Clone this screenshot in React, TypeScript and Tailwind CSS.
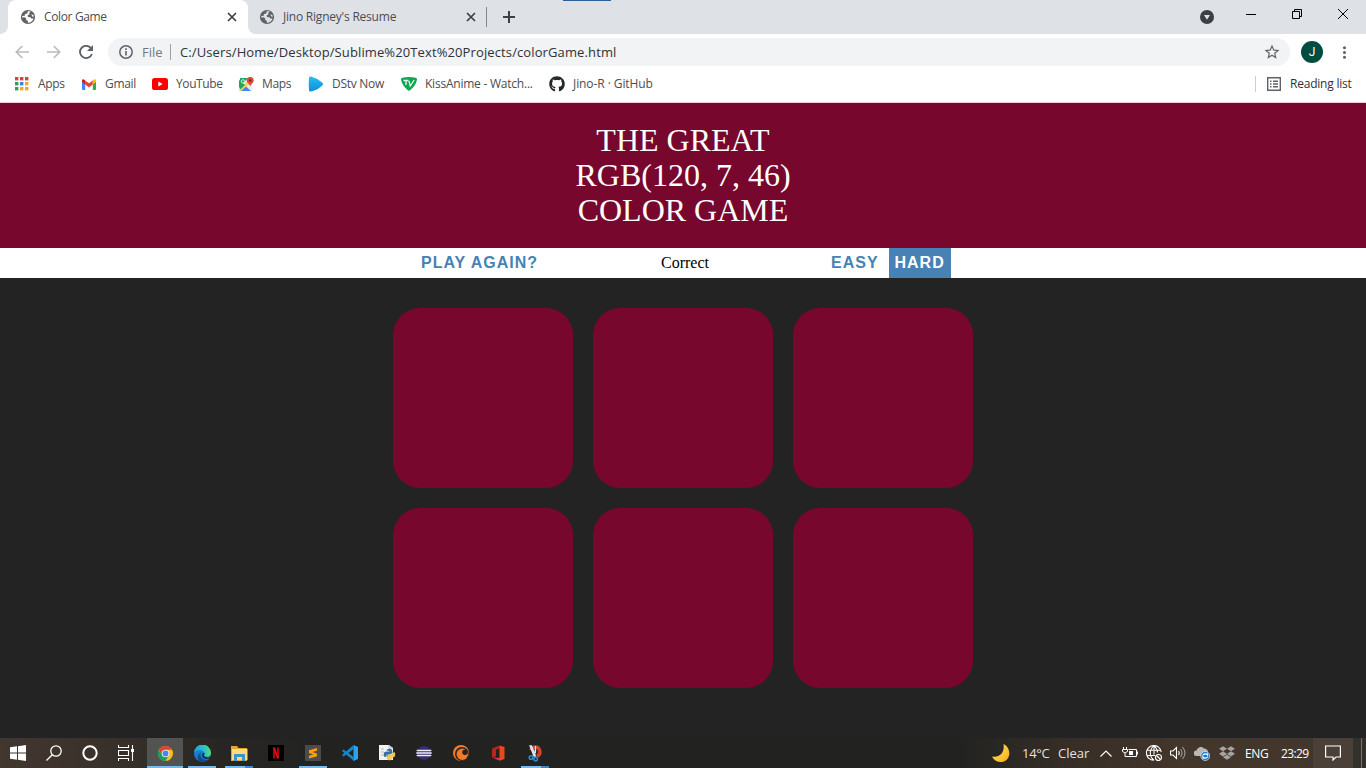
import React from "react";
import { FaGithub, FaDropbox, FaPython } from "react-icons/fa";
import { MdStarBorder, MdMoreVert } from "react-icons/md";

const Cross = () => (
  <svg className="size-[10px] shrink-0" viewBox="0 0 10 10" stroke="#3c4043" strokeWidth="1.7">
    <path d="M1 1l8 8M9 1L1 9" />
  </svg>
);

const GlobeIcon = ({ land }: { land: string }) => (
  <svg className="size-4 shrink-0" viewBox="0 0 16 16">
    <circle cx="8" cy="8" r="7.100" fill="#5f6368" />
    <path d="M7.800 2.300L10.800 2.300 9.200 3.900 9.500 5.300 7.600 6.600 8 8.100 10.500 8.200 11.300 9.600 13.600 9.600C12.800 12.300 10.700 13.900 7.800 13.800L7.900 11.900 6.200 11 6.100 9.300 4.300 8.200 2.200 8.500 2.200 7 4.700 6.700 5.100 5 7.300 4.400z" fill={land} />
    <path d="M11.300 5.300l2.100.600.400 1.900-1.600-.300z" fill={land} />
  </svg>
);

function TabStrip() {
  return (
    <div className="relative flex h-[34px] bg-[#dee1e6] pl-2 text-[12px] leading-[34px] text-[#4a4d51]">
      <div className="absolute left-[563px] top-0 h-px w-12 bg-[#2c5f96]" />
      <div className="absolute left-0 bottom-0 size-2 bg-white" />
      <div className="absolute left-0 bottom-0 size-2 rounded-br-lg bg-[#dee1e6]" />
      <div className="absolute left-[248px] bottom-0 size-2 bg-white" />
      <div className="absolute left-[248px] bottom-0 size-2 rounded-bl-lg bg-[#dee1e6]" />
      <div className="flex w-[240px] items-center rounded-t-lg bg-white pl-3">
        <GlobeIcon land="#ffffff" />
        <span className="ml-2 w-[183px] tracking-[-0.36px]">Color Game</span>
        <Cross />
      </div>
      <div className="flex w-[239px] items-center pl-[11px]">
        <GlobeIcon land="#dee1e6" />
        <span className="ml-2 w-[183px] tracking-[-0.22px]">Jino Rigney's Resume</span>
        <Cross />
      </div>
      <div className="-ml-px mt-[7px] h-5 w-px bg-[#85888d]" />
      <svg className="ml-4 mt-[11px] size-3" viewBox="0 0 12 12" stroke="#3c4043" strokeWidth="2">
        <path d="M6 0v12M0 6h12" />
      </svg>
      <svg className="ml-auto mt-[10px] size-[14px]" viewBox="0 0 14 14">
        <circle cx="7" cy="7" r="7" fill="#3c4043" />
        <path d="M4 5h6L7 9.800z" fill="#dee1e6" />
      </svg>
      <svg className="ml-8 mt-[14px] h-px w-[10px]" viewBox="0 0 10 1"><path d="M0 0h10v1H0z" /></svg>
      <svg className="ml-9 mt-[9px] size-[10px]" viewBox="0 0 10 10" fill="none" stroke="#000">
        <path d="M.5 2.500h7v7h-7zM2.500 2.500v-2h7v7h-2" />
      </svg>
      <svg className="ml-9 mr-[18px] mt-[9px] size-[10px]" viewBox="0 0 10 10" stroke="#000">
        <path d="M0 0l10 10M10 0L0 10" />
      </svg>
    </div>
  );
}

function Toolbar() {
  return (
    <div className="flex h-9 items-center bg-white pl-[15px]">
      <svg className="h-[14px] w-[14px]" viewBox="0 0 14 14" fill="none" stroke="#babcbe" strokeWidth="1.700"><path d="M14 7H1.500M7.300 1L1.300 7l6 6" /></svg>
      <svg className="ml-[18px] h-[14px] w-[14px]" viewBox="0 0 14 14" fill="none" stroke="#babcbe" strokeWidth="1.700"><path d="M0 7h12.500M6.700 1l6 6-6 6" /></svg>
      <svg className="ml-[18px] size-[14px]" viewBox="0 0 14 14">
        <path d="M11.700 2.900A6.100 6.100 0 1012.900 9" fill="none" stroke="#5f6368" strokeWidth="1.900" />
        <path d="M14 0v6H8z" fill="#5f6368" />
      </svg>
      <div className="ml-[15px] flex h-7 w-[1182px] items-center rounded-full bg-[#f1f3f4] pl-[11px]">
        <svg className="size-[14px]" viewBox="0 0 14 14"><circle cx="7" cy="7" r="6.200" fill="none" stroke="#5f6368" strokeWidth="1.500" /><path d="M6.200 3.300h1.600v1.600H6.200zM6.200 6.100h1.600v4.500H6.200z" fill="#5f6368" /></svg>
        <span className="ml-[9px] w-[28px] pt-px text-[13px] text-[#74787c]">File</span>
        <div className="h-4 w-px bg-[#9aa0a6]" />
        <span className="ml-[9px] whitespace-nowrap pt-px text-[13px] tracking-[0.115px] text-[#303236]">C:/Users/Home/Desktop/Sublime%20Text%20Projects/colorGame.html</span>
        <MdStarBorder className="ml-auto mr-[9px] size-[18px] text-[#5f6368]" />
      </div>
      <div className="ml-[11px] flex size-[22px] items-center justify-center rounded-full bg-[#004d40] font-['Roboto',sans-serif] text-[12px] text-white">J</div>
      <MdMoreVert className="ml-3 size-[19px] text-[#5f6368]" />
    </div>
  );
}

const AppsIcon = () => {
  const colors = ["#d94437", "#d94437", "#d94437", "#2f9e58", "#3b82e0", "#e8ad20", "#2f9e58", "#e8ad20", "#e8ad20"];
  return (
    <svg className="size-[14px]" viewBox="0 0 14 14">
      {colors.map((c, i) => <rect key={i} x={(i % 3) * 5} y={Math.floor(i / 3) * 5} width="3.400" height="3.400" fill={c} />)}
    </svg>
  );
};
const GmailIcon = () => (
  <svg className="h-[11px] w-[14px]" viewBox="0 0 14 11">
    <path d="M0 2v8q0 1 1 1h2.200V4.400z" fill="#4285f4" />
    <path d="M14 2v8q0 1-1 1h-2.200V4.400z" fill="#34a853" />
    <path d="M3.200 1.400L7 4.300l3.800-2.900v4.100L7 8.400 3.200 5.500z" fill="#ea4335" />
    <path d="M0 1.600Q.300-.600 2.400.700l.800.700v4.100L0 3z" fill="#c5221f" />
    <path d="M14 1.600Q13.700-.600 11.600.700l-.800.700v4.100L14 3z" fill="#fbbc04" />
  </svg>
);
const YouTubeIcon = () => (
  <svg className="h-[12px] w-4" viewBox="0 0 16 12">
    <rect width="16" height="12" rx="2.600" fill="#f00" /><path d="M6.300 3.400L10.600 6 6.300 8.600z" fill="#fff" />
  </svg>
);
const MapsIcon = () => (
  <svg className="size-[15px]" viewBox="0 0 15 15">
    <rect y="1" width="13" height="13" rx="1.500" fill="#e8eaed" />
    <path d="M1.300 1H9L1 9.800V2q0-1 .3-1z" fill="#1fa463" />
    <path d="M0 12.500L10.500 2 13 5 2.500 14H1.500Q0 14 0 12.500z" fill="#fbd75b" />
    <path d="M0 10V3l6 5-4.500 4.500z" fill="#24a35f" />
    <path d="M2 14l5-4.500L12 14z" fill="#4285f4" />
    <circle cx="4" cy="4.400" r="1.700" fill="none" stroke="#fff" strokeWidth=".8" />
    <path d="M11.200 9.500C11 7 7.700 6 7.700 3.400a3.500 3.500 0 017 0C14.700 6 11.500 7 11.200 9.500z" fill="#dd4b3e" />
    <circle cx="11.200" cy="3.400" r="1.200" fill="#7d251d" />
  </svg>
);
const DstvIcon = () => (
  <svg className="size-4" viewBox="0 0 16 16">
    <defs><linearGradient id="ds" x2="0" y2="1"><stop stopColor="#28bdf1" /><stop offset="1" stopColor="#0c8fdd" /></linearGradient></defs>
    <path d="M1 2Q1 0 3 .5q7 2 11.500 6.200 1.300 1.300 0 2.500Q10 14 3 15.500 1 16 1 14 .4 8 1 2z" fill="url(#ds)" />
  </svg>
);
const KissIcon = () => (
  <svg className="h-[14px] w-4" viewBox="0 0 16 14">
    <path d="M0 2.500Q0 1 1.500 .7 8-.7 14.500 .7 16 1 16 2.500 15.200 8 9.500 13q-1.500 1.500-3 0Q.8 8 0 2.500z" fill="#10a550" />
    <path d="M2.500 3.500h5M5.300 3.500L4.800 8M8 4l1.200 5 4-6" fill="none" stroke="#e9fff2" strokeWidth="1.300" />
  </svg>
);

function Bookmark({ icon, label, className }: { icon: React.ReactNode; label: string; className: string }) {
  return (
    <div className={`flex shrink-0 items-center whitespace-nowrap ${className}`}>
      <div className="flex w-4 shrink-0 justify-center">{icon}</div>
      <span className="ml-2">{label}</span>
    </div>
  );
}

function Bookmarks() {
  return (
    <div className="flex h-8 items-center bg-white pb-1 pl-[14px] text-[12px] text-[#4a4d51]">
      <Bookmark className="w-[67px] tracking-[-0.3px]" label="Apps" icon={<AppsIcon />} />
      <Bookmark className="w-[71px] tracking-[-0.3px]" label="Gmail" icon={<GmailIcon />} />
      <Bookmark className="w-[86px] tracking-[-0.4px]" label="YouTube" icon={<YouTubeIcon />} />
      <Bookmark className="w-[70px] tracking-[-0.35px]" label="Maps" icon={<MapsIcon />} />
      <Bookmark className="w-[93px] tracking-[-0.28px]" label="DStv Now" icon={<DstvIcon />} />
      <Bookmark className="w-[148px] tracking-[-0.23px]" label="KissAnime - Watch..." icon={<KissIcon />} />
      <Bookmark className="w-[110px] tracking-[-0.08px]" label="Jino-R · GitHub" icon={<FaGithub className="size-4 text-[#24292e]" />} />
      <div className="ml-auto h-4 w-px bg-[#ccced1]" />
      <svg className="ml-[11px] size-[14px]" viewBox="0 0 14 14" fill="none" stroke="#5f6368" strokeWidth="1.400">
        <path d="M.7.7h12.600v12.600H.7zM3 4.300h1.500M6 4.300h5M3 7h1.500M6 7h5M3 9.700h1.500M6 9.700h5" />
      </svg>
      <span className="ml-[9px] w-[76px] whitespace-nowrap tracking-[-0.22px] text-[#303236]">Reading list</span>
    </div>
  );
}

function Game() {
  return (
    <main className="flex-1 bg-[#232323]">
      <header className="h-[145px] bg-[#78072e] pt-5 text-center font-['Liberation_Serif',serif] text-[32px] leading-[35px] text-white">
        <div>THE GREAT</div><div>RGB(120, 7, 46)</div><div>COLOR GAME</div>
      </header>
      <nav className="flex h-[30px] items-start bg-white pl-[415px] font-['Liberation_Sans',sans-serif] text-[16px] font-bold leading-[30px] tracking-[1px] text-[#4682b4]">
        <button className="w-[129px] whitespace-nowrap pl-[6px] text-left">PLAY AGAIN?</button>
        <span className="w-[281px] pl-[117px] font-['Liberation_Serif',serif] font-normal leading-[30px] tracking-normal text-black">Correct</span>
        <button className="w-[64px] pl-[6px] text-left">EASY</button>
        <button className="w-[62px] bg-[#4682b4] pl-[5.500px] text-left text-white">HARD</button>
      </nav>
      <div className="grid grid-cols-[repeat(3,180px)] justify-center gap-5 pt-[30px]">
        {[0, 1, 2, 3, 4, 5].map((i) => <div key={i} className="h-[180px] rounded-[27px] bg-[#78072e]" />)}
      </div>
    </main>
  );
}

const WinIcon = () => (
  <svg className="size-4" viewBox="0 0 16 16" fill="#fff"><path d="M0 2.300L7 1.300V7.500H0zM8 1.200L16 0v7.500H8zM0 8.500h7v6.200L0 13.700zM8 8.500h8V16l-8-1.200z" /></svg>
);
const SearchIcon = () => (
  <svg className="size-4" viewBox="0 0 16 16" fill="none" stroke="#fff" strokeWidth="1.300"><circle cx="10" cy="6" r="5.200" /><path d="M6.300 9.700L.5 15.500" /></svg>
);
const CortanaIcon = () => <svg className="size-4" viewBox="0 0 16 16"><circle cx="8" cy="8" r="6.700" fill="none" stroke="#fff" strokeWidth="2" /></svg>;
const TaskViewIcon = () => (
  <svg className="size-4" viewBox="0 0 16 16" fill="none" stroke="#fff" strokeWidth="1.100">
    <path d="M.5 0v2.500h10V0M.5 16v-2.500h10V16M.5 5.500h10v5H.5zM14.500 0v16" /><path d="M13 4h3v3h-3z" fill="#fff" stroke="none" />
  </svg>
);
const ChromeIcon = () => (
  <svg className="size-[15px]" viewBox="0 0 16 16">
    <circle cx="8" cy="8" r="8" fill="#fbc116" />
    <path d="M1.070 4A8 8 0 0114.930 4H8L4.540 10z" fill="#db4437" />
    <path d="M1.070 4A8 8 0 008 16l3.460-6L8 12 4.540 10z" fill="#1a9f5a" />
    <circle cx="8" cy="8" r="4" fill="#f1f1f1" /><circle cx="8" cy="8" r="3.100" fill="#4285f4" />
  </svg>
);
const EdgeIcon = () => (
  <svg className="size-[17px]" viewBox="0 0 16 16">
    <defs>
      <linearGradient id="ea"><stop stopColor="#249ee8" /><stop offset=".6" stopColor="#25c5c8" /><stop offset="1" stopColor="#65d866" /></linearGradient>
      <linearGradient id="eb" x2="0" y2="1"><stop stopColor="#168bd6" /><stop offset="1" stopColor="#1b6fc0" /></linearGradient>
    </defs>
    <circle cx="8" cy="8" r="8" fill="url(#eb)" />
    <path d="M0 7.500A8 8 0 0116 7.700c0 3.300-4.900 4.300-6.200 2.700-.7-.8.400-1 .2-2.500C9.400 4.400 2.500 3.300 0 7.500z" fill="url(#ea)" />
    <path d="M9.800 7.500c0 1.400-.9 1.900-.3 2.900 1 1.700 4.400 1.600 5.600.8L16 12l-1.700 .6c-4 1-6.600-.6-6.600-2.900C7.700 8 9 6.500 9.800 7.500z" fill="#232323" />
    <path d="M6.700 7C4.300 10 7.200 14.500 12.500 14q-2 1.800-4.500 2C2.500 15.500 2.200 9 6.700 7z" fill="#0d4c92" />
  </svg>
);
const FolderIcon = () => (
  <svg className="h-[15px] w-[17px]" viewBox="0 0 17 15">
    <path d="M0 0h6l1.500 2H16v13H0z" fill="#e5a52a" /><path d="M1 3h15.500v11H1z" fill="#ffdc78" />
    <path d="M3 15V8h11v7h-3v-4H6v4z" fill="#3d94d1" />
  </svg>
);
const NetflixIcon = () => (
  <svg className="size-4" viewBox="0 0 16 16"><path d="M0 0h16v16H0z" fill="#000" /><path d="M5 2.500h2v11H5zM9 2.500h2v11H9z" fill="#a80710" /><path d="M5 2.500h2l4 11H9z" fill="#e50914" /></svg>
);
const SublimeIcon = () => (
  <svg className="size-4" viewBox="0 0 16 16"><path d="M0 0h16v16H0z" fill="#4b4b4b" /><path d="M4 5.200L12 3v2.700L7.500 7 12 8.400V11.300L4 13.500v-2.700l4.300-1.300L4 8z" fill="#ff9d0a" /></svg>
);
const CodeIcon = () => (
  <svg className="size-4" viewBox="0 0 16 16">
    <path d="M11.500 0L16 2v12l-4.500 2z" fill="#29a4ee" />
    <path d="M1.500 4.500L12 12.300V16L0 6zM0 10L11.500 0v4.200L1.500 11.500z" fill="#1585ce" />
  </svg>
);
const PythonIcon = () => (
  <div className="relative size-4">
    <svg className="absolute inset-0" viewBox="0 0 16 16"><path d="M0 0h10l4 3v12H0z" fill="#f2f2f2" /><path d="M10 0v3h4M2 4h3M2 7h3M2 10h3" stroke="#bbb" fill="none" /></svg>
    <FaPython className="absolute left-[4px] top-[3px] size-[13px] text-[#356e9f] [clip-path:polygon(0_0,100%_0,100%_25%,0_80%)]" />
    <FaPython className="absolute left-[4px] top-[3px] size-[13px] text-[#f5c83c] [clip-path:polygon(100%_25%,100%_100%,0_100%,0_80%)]" />
  </div>
);
const EclipseIcon = () => (
  <svg className="size-4" viewBox="0 0 16 16"><circle cx="8" cy="8" r="7" fill="#352c72" /><path d="M.7 5.500h14.600M.3 8h15.400M.7 10.500h14.600" stroke="#eeedf6" strokeWidth="1.300" /></svg>
);
const CrunchyIcon = () => (
  <svg className="size-4" viewBox="0 0 16 16">
    <circle cx="8" cy="8" r="8" fill="#f47a25" />
    <circle cx="8.900" cy="9" r="6.900" fill="#232323" />
    <circle cx="9.300" cy="9.300" r="5.700" fill="#f47a25" />
    <circle cx="12" cy="7.300" r="2.700" fill="#232323" />
  </svg>
);
const OfficeIcon = () => (
  <svg className="h-4 w-[13px]" viewBox="0 0 13 16">
    <path d="M0 3.500L7.500 .5V3.500L4 4.800v6.700L0 12.500z" fill="#b5261f" />
    <path d="M7.500 .5L12.500 2v12l-5 1.800z" fill="#e94a18" />
    <path d="M0 12.500L8 13v2.800z" fill="#d83b4b" />
  </svg>
);
const SnipIcon = () => (
  <svg className="h-[17px] w-4" viewBox="0 0 16 17" fill="none">
    <path d="M4 5.500A4.500 4.500 0 018 2a4.800 4.800 0 012 9.200" stroke="#cf4327" strokeWidth="3.600" />
    <path d="M3 1l1.500 0L8.500 11H7zM8.500 1v6L6.500 11" fill="#dbe4ea" stroke="#dbe4ea" strokeWidth="1.300" />
    <circle cx="4" cy="12.500" r="1.800" stroke="#2e8bd0" strokeWidth="1.500" /><circle cx="8.700" cy="14" r="1.800" stroke="#2e8bd0" strokeWidth="1.500" />
  </svg>
);

function Taskbar() {
  const pinned = [<WinIcon />, <SearchIcon />, <CortanaIcon />, <TaskViewIcon />];
  const apps = [
    { icon: <ChromeIcon />, cls: "bg-[#535452]", line: "w-9" },
    { icon: <EdgeIcon />, cls: "", line: "w-7" },
    { icon: <FolderIcon />, cls: "", line: "w-7 border-r-[8px] border-[#4a83b5]" },
    { icon: <NetflixIcon />, cls: "", line: "" },
    { icon: <SublimeIcon />, cls: "", line: "w-7" },
    { icon: <CodeIcon />, cls: "", line: "" },
    { icon: <PythonIcon />, cls: "", line: "" },
    { icon: <EclipseIcon />, cls: "", line: "" },
    { icon: <CrunchyIcon />, cls: "", line: "" },
    { icon: <OfficeIcon />, cls: "", line: "" },
    { icon: <SnipIcon />, cls: "", line: "w-7 border-r-[8px] border-[#4a83b5]" },
  ];
  return (
    <footer className="flex h-[30px] items-center bg-[linear-gradient(90deg,#42372f_0,#362f29_130px,#282623_220px,#222321_320px,#222321_960px,#352d26_1060px,#43362b_1180px,#43372d_1300px,#30302a_1366px)] text-[12px] text-white">
      {pinned.map((p, i) => <div key={i} className="flex w-9 shrink-0 justify-center">{p}</div>)}
      <div className="ml-[3px] flex gap-px">
        {apps.map((a, i) => (
          <div key={i} className={`flex h-[30px] w-9 flex-col items-center ${a.cls}`}>
            <div className="flex h-7 items-center pt-[2px]">{a.icon}</div>
            {a.line && <div className={`h-[2px] bg-[#76b9ed] ${a.line}`} />}
          </div>
        ))}
      </div>
      <svg className="ml-auto size-[18px]" viewBox="0 0 18 18">
        <defs><linearGradient id="mo" x2="1" y2="1"><stop stopColor="#ffe866" /><stop offset="1" stopColor="#f9ae13" /></linearGradient></defs>
        <path d="M11.500 0C20 4 19 17 9.500 18 5 18.300 1.500 16 0 12.500 8 14 13 8 11.500 0z" fill="url(#mo)" />
      </svg>
      <span className="ml-[12px] w-[36px] pt-[2px] text-[13px] tracking-[-0.3px] text-[#e5e2df]">14°C</span>
      <span className="w-[42px] pt-[2px] text-[13px] text-[#e5e2df]">Clear</span>
      <svg className="h-[7px] w-3" viewBox="0 0 12 7" fill="none" stroke="#fff" strokeWidth="1.200"><path d="M.5 6.500L6 1l5.500 5.500" /></svg>
      <svg className="ml-[10px] h-3 w-4" viewBox="0 0 16 12" fill="none" stroke="#fff">
        <path d="M6.500 2.500h8v7H4.500M15.500 4.500v3M1.500 0v2.500M4.500 0v2.500M.5 2.500h5v2q-2.500 3-5 0zM3 6v3.500h2" /><path d="M7 4h4v4H7z" fill="#fff" stroke="none" />
      </svg>
      <svg className="ml-2 size-4" viewBox="0 0 16 16" fill="none" stroke="#fff" strokeWidth="1.100">
        <path d="M8 15.300A7.400 7.400 0 1115.200 7M8 .6C3 5 3 11 8 15.400M8 .6c3 2.600 3.500 4.500 3.500 7M1 5.300h14M1 10.500h8M8 .6v9" /><circle cx="12.500" cy="12.500" r="3" /><path d="M10.500 10.500l4 4" />
      </svg>
      <svg className="ml-[8px] h-[14px] w-4" viewBox="0 0 16 14" fill="none" stroke="#fff" strokeWidth="1.100">
        <path d="M.5 5H3l3.500-3.500v11L3 9H.5zM8.500 5q1.400 2 0 4" /><path d="M10.500 3q3 4 0 8M12.500 1q5 6 0 12" stroke="#a09a94" />
      </svg>
      <svg className="ml-2 mt-[2px] h-[14px] w-4" viewBox="0 0 16 14">
        <path d="M2.500 9a2.700 2.700 0 010-5.500A4.300 4.300 0 0110 1.500 4 4 0 0114 6v3z" fill="#bab7b4" /><circle cx="11.300" cy="9" r="4.500" fill="#1876c9" stroke="#fff" strokeWidth=".6" /><path d="M8.600 8.500q2.300-3 5-.5V6.200M14 9.500q-2.300 3-5 .5v1.800" stroke="#fff" fill="none" strokeWidth="1.200" />
      </svg>
      <FaDropbox className="ml-[9px] size-4 text-[#a7a4a0]" />
      <span className="ml-[10px] w-[36px] pt-px tracking-[-0.4px]">ENG</span>
      <span className="w-[32px] pt-px tracking-[-0.65px]">23:29</span>
      <div className="flex h-[30px] w-10 items-center justify-center bg-[#4b4037]">
        <svg className="h-4 w-4" viewBox="0 0 16 16" fill="none" stroke="#fff" strokeWidth="1.200"><path d="M.6 1h14.800v11H11l-3 3v-3H.6z" /></svg>
      </div>
      <div className="ml-2 mr-1 h-[30px] w-px bg-[#77706a]" />
    </footer>
  );
}

export default function App() {
  return (
    <div className="flex h-[768px] w-[1366px] flex-col overflow-hidden font-['Open_Sans','Noto_Sans',sans-serif]">
      <TabStrip />
      <Toolbar />
      <Bookmarks />
      <div className="h-px bg-[#f7c9d8]" />
      <Game />
      <Taskbar />
    </div>
  );
}
